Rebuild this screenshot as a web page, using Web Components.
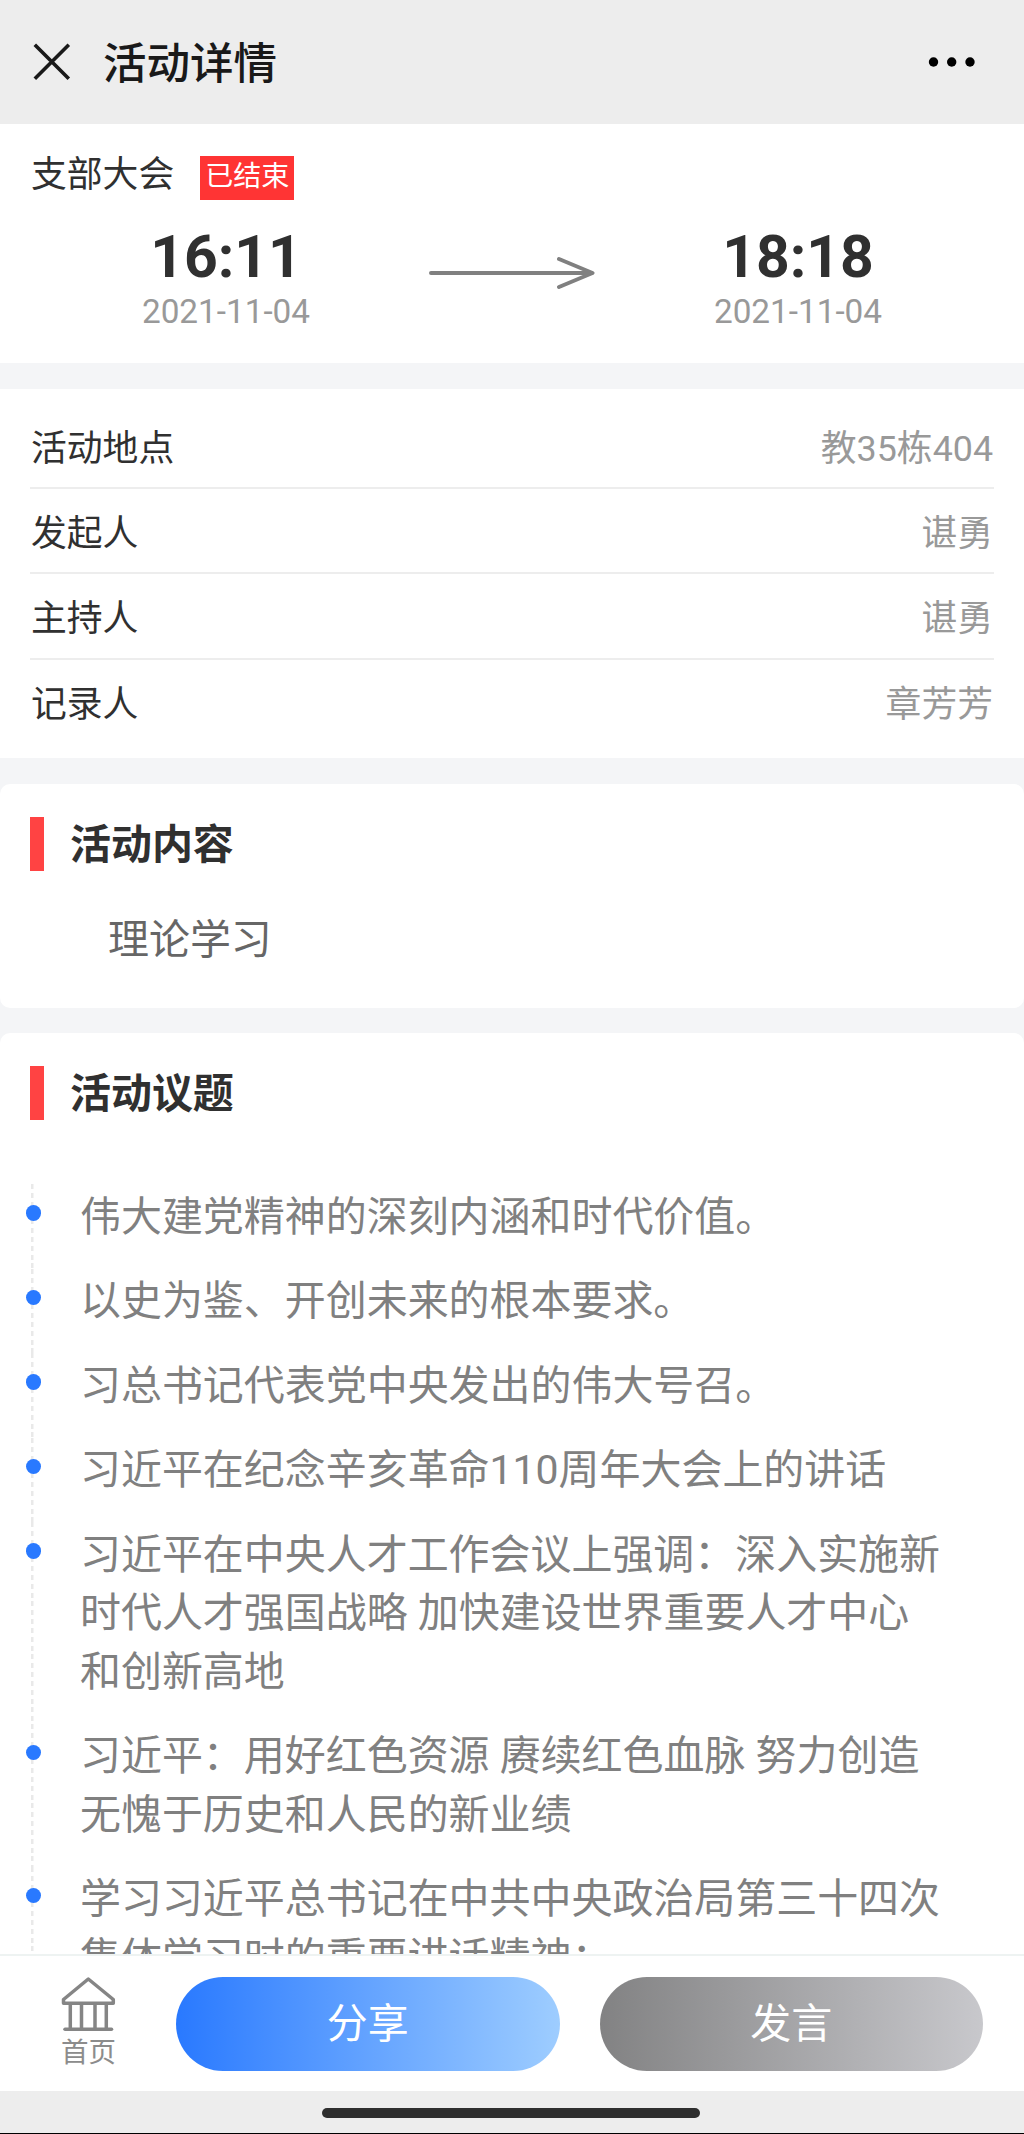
<!DOCTYPE html>
<html lang="zh-CN">
<head>
<meta charset="utf-8">
<title>活动详情</title>
<style>
  html, body {
    margin: 0;
    height: 2134px;
    overflow: hidden;
  }

  body {
    font-family: Roboto, "Noto Sans CJK SC", sans-serif;
    color: #303030;
    background: #f4f5f7;
  }
</style>
</head>
<body>
<activity-page>
  <nav-bar slot="header">活动详情</nav-bar>

  <time-card name="支部大会" status="已结束">
    <time-point slot="start" time="16:11" date="2021-11-04"></time-point>
    <time-point slot="end" time="18:18" date="2021-11-04"></time-point>
  </time-card>

  <info-list>
    <info-row label="活动地点">教35栋404</info-row>
    <info-row label="发起人">谌勇</info-row>
    <info-row label="主持人">谌勇</info-row>
    <info-row label="记录人">章芳芳</info-row>
  </info-list>

  <section-card heading="活动内容">
    <content-text>理论学习</content-text>
  </section-card>

  <section-card heading="活动议题">
    <topic-list>
      <topic-item>伟大建党精神的深刻内涵和时代价值。</topic-item>
      <topic-item>以史为鉴、开创未来的根本要求。</topic-item>
      <topic-item>习总书记代表党中央发出的伟大号召。</topic-item>
      <topic-item>习近平在纪念辛亥革命110周年大会上的讲话</topic-item>
      <topic-item>习近平在中央人才工作会议上强调：深入实施新时代人才强国战略 加快建设世界重要人才中心和创新高地</topic-item>
      <topic-item>习近平：用好红色资源 赓续红色血脉 努力创造无愧于历史和人民的新业绩</topic-item>
      <topic-item>学习习近平总书记在中共中央政治局第三十四次集体学习时的重要讲话精神：</topic-item>
    </topic-list>
  </section-card>

  <bottom-bar slot="footer">
    <home-link slot="home">首页</home-link>
    <pill-button>分享</pill-button>
    <pill-button type="muted">发言</pill-button>
  </bottom-bar>
  <gesture-bar slot="footer"></gesture-bar>
</activity-page>

<script>
  // Small base class: subclasses only return their markup from template()
  class BaseElement extends HTMLElement {
    constructor() {
      super();
      this.attachShadow({ mode: "open" });
    }

    connectedCallback() {
      this.shadowRoot.innerHTML = this.template();
    }
  }

  class ActivityPage extends BaseElement {
    template() {
      return `
        <style>
          :host {
            display: flex;
            flex-direction: column;
            height: 2134px;
          }
          main {
            flex: 1;
            min-height: 0;
            overflow: hidden;
            display: flex;
            flex-direction: column;
            gap: 25.6px;
          }
          ::slotted(*) {
            flex-shrink: 0;
          }
        </style>
        <slot name="header"></slot>
        <main><slot></slot></main>
        <slot name="footer"></slot>
      `;
    }
  }

  class NavBar extends BaseElement {
    template() {
      return `
        <style>
          :host {
            display: flex;
            align-items: center;
            box-sizing: border-box;
            height: 124px;
            padding: 0 48px 0 32px;
            background: #ededed;
            color: #191919;
          }
          h1 {
            flex: 1;
            margin: 0 0 0 31px;
            padding-top: 6px;
            font-size: 43.5px;
            font-weight: 500;
            line-height: 60px;
          }
          svg {
            display: block;
          }
        </style>
        <svg width="40" height="40" viewBox="0 0 40 40" fill="none" stroke="#191919" stroke-width="3.6">
          <path d="M2.800 2.800L36.800 36.800M36.800 2.800L2.800 36.800"/>
        </svg>
        <h1><slot></slot></h1>
        <svg width="48" height="12" viewBox="0 0 48 12" fill="#000">
          <circle cx="5.5" cy="6" r="4.7"/>
          <circle cx="23.7" cy="6" r="4.7"/>
          <circle cx="42" cy="6" r="4.7"/>
        </svg>
      `;
    }
  }

  class TimeCard extends BaseElement {
    template() {
      return `
        <style>
          :host {
            display: block;
            box-sizing: border-box;
            height: 239px;
            padding: 32px 31px 0;
            background: #fff;
          }
          .title {
            display: flex;
            align-items: flex-start;
            height: 66px;
          }
          .name {
            font-size: 35.8px;
            line-height: 38px;
          }
          .status {
            height: 44px;
            margin-left: 26px;
            padding: 0 5px;
            background: #ff3434;
            color: #fff;
            font-size: 28px;
            line-height: 42px;
          }
          .range {
            display: grid;
            grid-template-columns: 390px 1fr 390px;
          }
          svg {
            display: block;
            margin: 33px auto 0;
          }
        </style>
        <div class="title">
          <span class="name">${this.getAttribute("name")}</span>
          <span class="status">${this.getAttribute("status")}</span>
        </div>
        <div class="range">
          <slot name="start"></slot>
          <svg width="168" height="36" viewBox="0 0 168 36" fill="none" stroke="#808080" stroke-width="4" stroke-linecap="round" stroke-linejoin="round">
            <path d="M3 18H164M131 4L164.500 18L131 32"/>
          </svg>
          <slot name="end"></slot>
        </div>
      `;
    }
  }

  class TimePoint extends BaseElement {
    template() {
      return `
        <style>
          :host {
            display: block;
            text-align: center;
          }
          .time {
            font-size: 58.9px;
            font-weight: 700;
            line-height: 70px;
          }
          .date {
            color: #999;
            font-size: 33.3px;
            line-height: 40px;
          }
        </style>
        <div class="time">${this.getAttribute("time")}</div>
        <div class="date">${this.getAttribute("date")}</div>
      `;
    }
  }

  class InfoList extends BaseElement {
    template() {
      return `
        <style>
          :host {
            display: block;
            padding: 15px 30px;
            background: #fff;
          }
          ::slotted(:not(:last-child)) {
            border-bottom: 2px solid #ededed;
          }
        </style>
        <slot></slot>
      `;
    }
  }

  class InfoRow extends BaseElement {
    template() {
      return `
        <style>
          :host {
            display: flex;
            justify-content: space-between;
            height: 83.4px;
            padding: 0 1px;
            font-size: 35.8px;
            line-height: 91px;
          }
          .value {
            color: #999;
          }
        </style>
        <span>${this.getAttribute("label")}</span>
        <span class="value"><slot></slot></span>
      `;
    }
  }

  class SectionCard extends BaseElement {
    template() {
      return `
        <style>
          :host {
            display: block;
            padding: 33px 30px 0;
            border-radius: 10px;
            background: #fff;
          }
          h2 {
            box-sizing: border-box;
            height: 54px;
            margin: 0;
            padding-left: 26px;
            border-left: 14px solid #ff4343;
            font-size: 40.96px;
            font-weight: 700;
            line-height: 57px;
          }
        </style>
        <h2>${this.getAttribute("heading")}</h2>
        <slot></slot>
      `;
    }
  }

  class ContentText extends BaseElement {
    template() {
      return `
        <style>
          :host {
            display: block;
            padding: 40px 78px 39px;
            color: #666;
            font-size: 40.96px;
            line-height: 58px;
          }
        </style>
        <slot></slot>
      `;
    }
  }

  class TopicList extends BaseElement {
    template() {
      return `
        <style>
          :host {
            display: block;
            padding-top: 64px;
          }
        </style>
        <slot></slot>
      `;
    }
  }

  class TopicItem extends BaseElement {
    template() {
      return `
        <style>
          :host {
            display: block;
            position: relative;
            width: 864px;
            padding: 3.5px 0 22.5px 50px;
            background: repeating-linear-gradient(#e9e9e9 0 5px, transparent 5px 8.83px) 1px 0 / 2.5px 100% no-repeat;
            color: #808080;
            font-size: 40.96px;
            line-height: 58.5px;
          }
          /* dot sits on top of the dashed line */
          .dot {
            position: absolute;
            top: 21px;
            left: -4.5px;
            width: 15.5px;
            height: 15.5px;
            border-radius: 50%;
            background: #2979ff;
          }
        </style>
        <i class="dot"></i>
        <slot></slot>
      `;
    }
  }

  class BottomBar extends BaseElement {
    template() {
      return `
        <style>
          :host {
            display: flex;
            align-items: flex-start;
            gap: 40px;
            box-sizing: border-box;
            height: 137px;
            padding: 21px 41px 0 61px;
            border-top: 2px solid #eef3f2;
            background: #fff;
          }
          ::slotted(home-link) {
            margin-right: 20px;
          }
        </style>
        <slot name="home"></slot>
        <slot></slot>
      `;
    }
  }

  class HomeLink extends BaseElement {
    template() {
      return `
        <style>
          :host {
            display: flex;
            flex-direction: column;
            align-items: center;
            width: 55px;
            color: #8c8c8c;
            font-size: 27.5px;
            line-height: 42px;
          }
        </style>
        <svg width="55" height="55" viewBox="0 0 55 55" fill="none" stroke="#858585" stroke-width="3.500" stroke-linecap="round" stroke-linejoin="round">
          <path d="M27.300 2L2.500 22.500V26.300H52.300V22.500Z"/>
          <path d="M9.300 27V52M20.500 27V52M34 27V52M45.300 27V52"/>
          <path d="M4 52.300H50.500"/>
        </svg>
        <span><slot></slot></span>
      `;
    }
  }

  class PillButton extends BaseElement {
    template() {
      return `
        <style>
          :host {
            display: block;
            flex: 1;
          }
          button {
            display: block;
            width: 100%;
            height: 94px;
            padding: 0;
            border: none;
            border-radius: 47px;
            background: linear-gradient(90deg, #2979ff, #9ecdff);
            color: #fff;
            font: inherit;
            font-size: 40.96px;
            line-height: 92px;
            cursor: pointer;
          }
          :host([type="muted"]) button {
            background: linear-gradient(90deg, #828283, #c8c8cc);
          }
        </style>
        <button><slot></slot></button>
      `;
    }
  }

  class GestureBar extends BaseElement {
    template() {
      return `
        <style>
          :host {
            display: flex;
            justify-content: center;
            box-sizing: border-box;
            height: 43px;
            padding: 17px 2px 0 0;
            border-bottom: 1px solid #000;
            background: #ededed;
          }
          div {
            width: 378px;
            height: 10px;
            border-radius: 5px;
            background: #2e2e2e;
          }
        </style>
        <div></div>
      `;
    }
  }

  customElements.define("activity-page", ActivityPage);
  customElements.define("nav-bar", NavBar);
  customElements.define("time-card", TimeCard);
  customElements.define("time-point", TimePoint);
  customElements.define("info-list", InfoList);
  customElements.define("info-row", InfoRow);
  customElements.define("section-card", SectionCard);
  customElements.define("content-text", ContentText);
  customElements.define("topic-list", TopicList);
  customElements.define("topic-item", TopicItem);
  customElements.define("bottom-bar", BottomBar);
  customElements.define("home-link", HomeLink);
  customElements.define("pill-button", PillButton);
  customElements.define("gesture-bar", GestureBar);
</script>
</body>
</html>
